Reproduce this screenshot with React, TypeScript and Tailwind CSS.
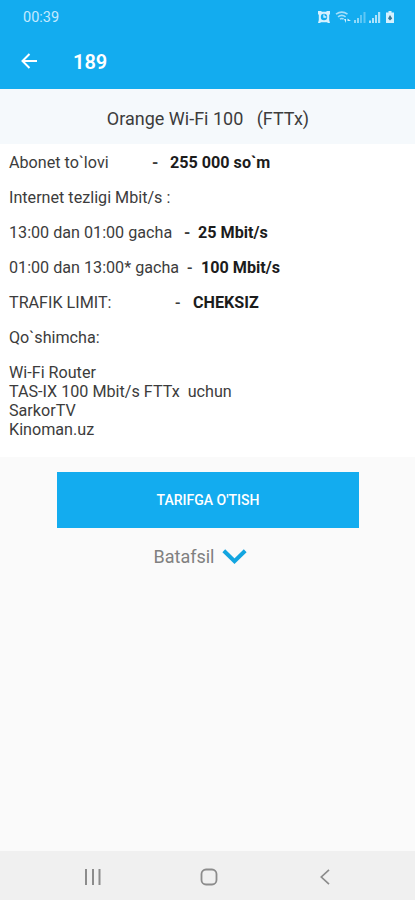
interface TariffRow {
  label: string;
  value?: string;
  labelClass?: string;
  dashClass?: string;
}

const rows: TariffRow[] = [
  { label: 'Abonet to`lovi', value: '255 000 so`m', labelClass: 'w-[143px]', dashClass: 'w-[18px] font-bold' },
  { label: 'Internet tezligi Mbit/s :' },
  { label: '13:00 dan 01:00 gacha', value: '25 Mbit/s', labelClass: 'w-[175px]', dashClass: 'w-[14px] font-bold' },
  { label: '01:00 dan 13:00* gacha', value: '100 Mbit/s', labelClass: 'w-[178px]', dashClass: 'w-[14px] font-medium' },
  { label: 'TRAFIK LIMIT:', value: 'CHEKSIZ', labelClass: 'w-[166px]', dashClass: 'w-[18px] font-medium' },
  { label: 'Qo`shimcha:' },
];

const extras = ['Wi-Fi Router', 'TAS-IX 100 Mbit/s FTTx  uchun', 'SarkorTV', 'Kinoman.uz'];

function StatusIcons() {
  return (
    <svg width="78" height="14" viewBox="0 0 78 14" fill="none" className="text-[#d5f1ff]">
      {/* alarm */}
      <path d="M1 1h3l1 .8h4L10 1h3v3l-.8 1v5l.8 3h-2l-1-.8H4L3 13H1l.8-3V5L1 4z" fill="currentColor" />
      <circle cx="7" cy="7" r="3.200" fill="#13acef" />
      <path d="M7 4.500V7h2.300" stroke="currentColor" strokeWidth="1.300" />
      {/* wifi */}
      <g stroke="currentColor" strokeWidth="1.600" opacity="0.75">
        <path d="M19 4.200c3.600-2.600 8-2.600 11.500 0M21 6.800c2.300-1.700 5.300-1.700 7.600 0M23 9.200c1.200-.9 2.400-.9 3.600 0" />
      </g>
      <path d="M27 9h2v4zM30.500 8.500L34 11h-3.500z" fill="currentColor" />
      {/* signal bars */}
      <g fill="currentColor" opacity="0.65">
        <path d="M37 10h2v3h-2zM40 8h2v5h-2z" />
        <path d="M43 5h2v8h-2zM46.500 2h2v11h-2z" opacity="0.6" />
      </g>
      <path d="M52 10.500h2V13h-2zM55 8h2v5h-2zM58 5h2v8h-2zM61 2h2.200v11H61z" fill="currentColor" opacity="0.8" />
      {/* battery */}
      <path d="M71.500 1h3v1.500h2.500V13h-8V2.500h2.500z" fill="currentColor" />
      <path d="M73 5l2.200 3.500L73 10.500 71 8.500z" fill="#397896" />
    </svg>
  );
}

function Header() {
  return (
    <header className="h-[89px] bg-[#13acef] text-white">
      <div className="flex h-[34px] items-center justify-between pl-[23px] pr-[20px]">
        <span className="pt-[2px] text-[14.500px] text-[#c4eaff]">00:39</span>
        <StatusIcons />
      </div>
      <div className="flex h-[54px] items-center pl-[21px]">
        <svg width="17" height="16" viewBox="0 0 17 16" fill="none" stroke="currentColor" strokeWidth="2">
          <path d="M16 8H2M8.500 1L1.500 8l7 7" />
        </svg>
        <h1 className="ml-[35px] pt-px text-[20px] font-semibold">189</h1>
      </div>
    </header>
  );
}

function NavBar() {
  return (
    <nav className="flex h-[49px] items-center bg-[#f0f0f0] pt-[3px] text-[#8c8c8c]">
      <svg width="16" height="16" viewBox="0 0 16 16" fill="currentColor" className="ml-[85px]">
        <path d="M0 0h2v16H0zM7 0h2v16H7zM13.500 0h2v16h-2z" />
      </svg>
      <svg width="18" height="18" viewBox="0 0 18 18" fill="none" stroke="currentColor" strokeWidth="1.800" className="ml-[99px]">
        <rect x="1.500" y="1.500" width="15" height="15" rx="4.500" />
      </svg>
      <svg width="10" height="16" viewBox="0 0 10 16" fill="none" stroke="currentColor" strokeWidth="1.700" className="ml-[102px]">
        <path d="M9 .8L1.300 8 9 15.200" />
      </svg>
    </nav>
  );
}

export default function App() {
  return (
    <div className="flex h-screen flex-col bg-[#fafafa] font-[Roboto,sans-serif] text-[#3c3c3c]">
      <Header />
      <h2 className="flex h-[55px] items-center justify-center whitespace-pre bg-[#f5f9fc] pl-px pt-[3px] text-[18px]">
        Orange Wi-Fi 100{'   '}(FTTx)
      </h2>
      <section className="h-[313px] bg-white pl-[9px] pt-[9px] text-[16.150px] leading-[19px]">
        {rows.map((row) => (
          <div key={row.label} className="mb-4 flex whitespace-pre">
            <span className={row.labelClass}>{row.label}</span>
            {row.value && (
              <>
                <span className={row.dashClass}>-</span>
                <span className="font-bold text-[#1c1c1c]">{row.value}</span>
              </>
            )}
          </div>
        ))}
        {extras.map((item) => (
          <p key={item} className="whitespace-pre">
            {item}
          </p>
        ))}
      </section>
      <main className="flex flex-1 flex-col items-center pt-[15px]">
        <button className="ml-px h-[56px] w-[302px] bg-[#13acef] pt-px text-[14px] font-medium text-white">
          TARIFGA O'TISH
        </button>
        <div className="mt-[17px] flex items-center pr-4 text-[18px] leading-6 text-[#808080]">
          <span className="ml-[1px]">Batafsil</span>
          <svg width="25" height="16" viewBox="0 0 25 16" fill="none" stroke="#13a5e0" strokeWidth="4" className="ml-[7px]">
            <path d="M1.800 1.800l10.700 10.400L23.200 1.800" />
          </svg>
        </div>
      </main>
      <NavBar />
    </div>
  );
}
